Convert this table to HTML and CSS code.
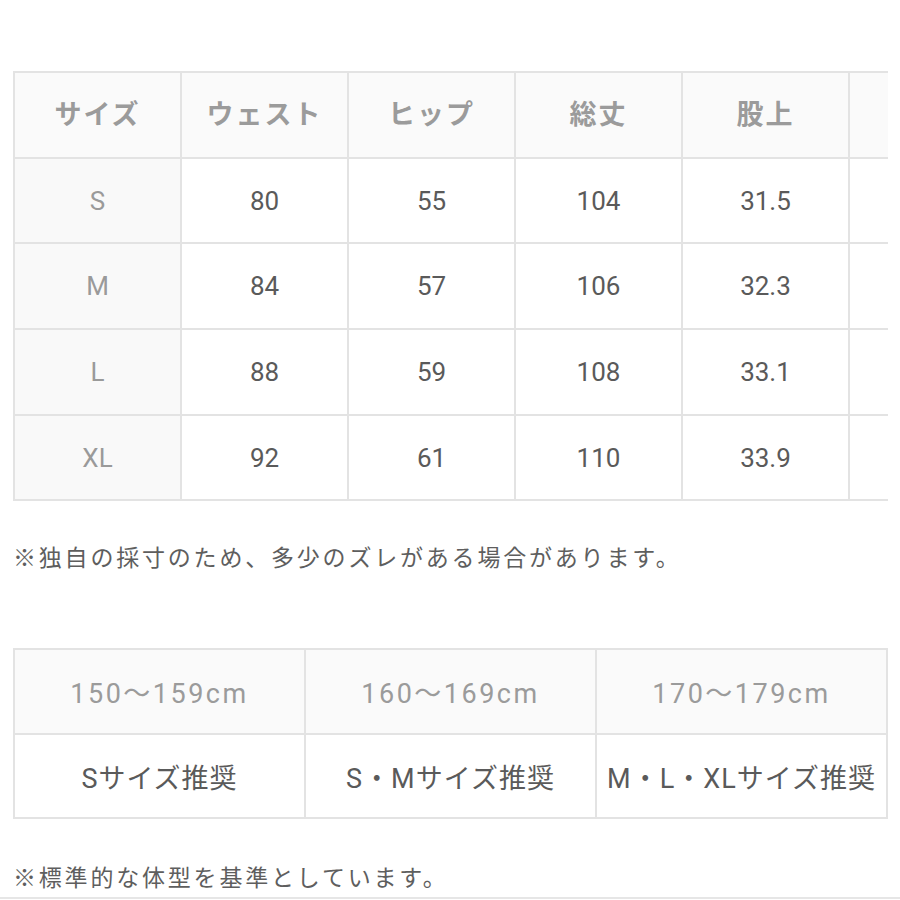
FILE: index.html
```html
<!DOCTYPE html>
<html lang="ja">
<head>
<meta charset="utf-8">
<link rel="stylesheet" href="styles.css">
</head>
<body>
<div class="page">
  <div class="clip">
    <table class="size">
      <tr class="head">
        <th>サイズ</th><th>ウェスト</th><th>ヒップ</th><th>総丈</th><th>股上</th><th></th>
      </tr>
      <tr><td class="first">S</td><td>80</td><td>55</td><td>104</td><td>31.5</td><td></td></tr>
      <tr><td class="first">M</td><td>84</td><td>57</td><td>106</td><td>32.3</td><td></td></tr>
      <tr><td class="first">L</td><td>88</td><td>59</td><td>108</td><td>33.1</td><td></td></tr>
      <tr><td class="first">XL</td><td>92</td><td>61</td><td>110</td><td>33.9</td><td></td></tr>
    </table>
  </div>
  <p class="note note1">※独自の採寸のため、多少のズレがある場合があります。</p>
  <table class="height">
    <tr class="head"><th>150〜159cm</th><th>160〜169cm</th><th>170〜179cm</th></tr>
    <tr><td>Sサイズ推奨</td><td>S・Mサイズ推奨</td><td>M・L・XLサイズ推奨</td></tr>
  </table>
  <p class="note note2">※標準的な体型を基準としています。</p>
  <div class="rule"></div>
</div>
</body>
</html>
```

FILE: styles.css
```css
html, body {
  margin: 0;
  padding: 0;
  background: #ffffff;
}
.page {
  width: 900px;
  height: 900px;
  overflow: hidden;
  padding-top: 71px;
  box-sizing: border-box;
  font-family: "Roboto", "Noto Sans CJK JP", sans-serif;
}
.clip {
  margin-left: 13px;
  width: 875px;
  overflow: hidden;
}
table {
  border-collapse: collapse;
  table-layout: fixed;
}
th, td {
  border: 2px solid #e3e3e3;
  text-align: center;
  vertical-align: middle;
  padding: 0;
}
.size {
  width: 1002px;
}
.size th, .size td {
  width: 165px;
  height: 83.7px;
}
.size th {
  height: 78.7px;
  background: #fafafa;
  color: #9b9b9b;
  font-family: "Noto Sans CJK JP", sans-serif;
  font-weight: 700;
  font-size: 27px;
  letter-spacing: 2px;
  padding-bottom: 5px;
}
.size td {
  color: #5a5a5a;
  font-size: 26px;
  background: #ffffff;
}
.size td.first {
  background: #f9f9f9;
  color: #9a9a9a;
}
.note {
  margin: 0;
  margin-left: 13px;
  color: #5e5e5e;
  font-family: "Noto Sans CJK JP", sans-serif;
  font-size: 23px;
  letter-spacing: 2.8px;
  line-height: 30px;
}
.note1 {
  margin-top: 40px;
}
.height {
  margin-left: 13px;
  margin-top: 77px;
  width: 875px;
}
.height th, .height td {
  height: 82.5px;
}
.height th {
  background: #fafafa;
  color: #9b9b9b;
  font-weight: 400;
  font-size: 27px;
  letter-spacing: 2.5px;
}
.height td {
  color: #5a5a5a;
  font-size: 27px;
  letter-spacing: 1px;
  font-family: "Roboto", "Noto Sans CJK JP", sans-serif;
}
.note2 {
  margin-top: 42px;
}
.rule {
  margin-top: 6px;
  height: 2px;
  background: #e6e6e6;
}
```
